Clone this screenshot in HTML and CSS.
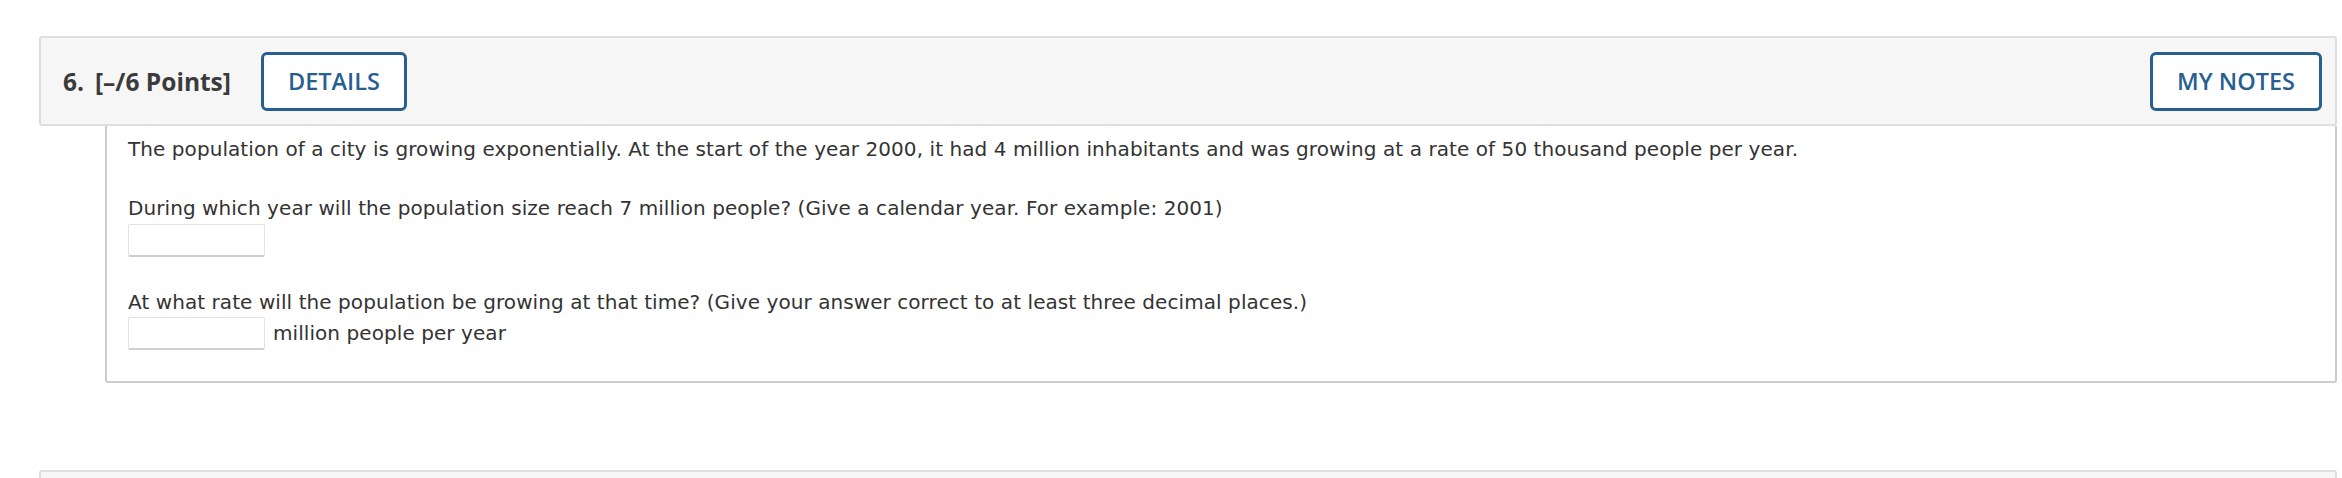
FILE: index.html
```html
<!DOCTYPE html>
<html lang="en">
<head>
<meta charset="utf-8">
<title>Question 6</title>
<link rel="stylesheet" href="styles.css">
</head>
<body>
<div class="page">
  <section class="question">
    <header class="qhead">
      <div class="qhead-left">
        <span class="qnum">6.</span>
        <span class="qpoints">[–/6 Points]</span>
        <button class="btn" type="button">DETAILS</button>
      </div>
      <button class="btn" type="button">MY NOTES</button>
    </header>
    <div class="qbody">
      <p class="line">The population of a city is growing exponentially. At the start of the year 2000, it had 4 million inhabitants and was growing at a rate of 50 thousand people per year.</p>
      <p class="line gap">During which year will the population size reach 7 million people? (Give a calendar year. For example: 2001)</p>
      <div class="ansrow"><input class="ans" type="text"></div>
      <p class="line gap2">At what rate will the population be growing at that time? (Give your answer correct to at least three decimal places.)</p>
      <div class="ansrow"><input class="ans" type="text"><span class="unit">million people per year</span></div>
    </div>
  </section>
  <section class="question next">
    <header class="qhead stub"></header>
  </section>
</div>
</body>
</html>
```
FILE: styles.css
```css
html, body {
  margin: 0;
  padding: 0;
  background: #ffffff;
  overflow: hidden;
}

.page {
  padding: 36px 5px 0 39px;
}

.question {
  display: flex;
  flex-direction: column;
}

.question.next {
  margin-top: 87px;
}

.qhead {
  box-sizing: border-box;
  height: 90px;
  border: 2px solid #dedede;
  border-radius: 3px;
  background: #f6f6f6;
  display: flex;
  align-items: center;
  justify-content: space-between;
  padding: 0 13px 0 22px;
  font-family: "Open Sans", "Noto Sans", sans-serif;
}

.qhead.stub {
  height: 30px;
}

.qhead-left {
  display: flex;
  align-items: center;
}

.qnum,
.qpoints {
  font-weight: 700;
  font-size: 24.5px;
  color: #3b3b3b;
}

.qnum {
  margin-right: 11px;
}

.qpoints {
  margin-right: 30px;
}

.btn {
  box-sizing: border-box;
  height: 59px;
  padding: 0 24px;
  border: 3px solid #27608f;
  border-radius: 6px;
  background: #ffffff;
  color: #27608f;
  font-family: "Open Sans", "Noto Sans", sans-serif;
  font-weight: 600;
  font-size: 23.5px;
  cursor: pointer;
}

.qbody {
  margin-left: 66px;
  border: 2px solid #cccccc;
  border-top: none;
  border-radius: 0 0 3px 3px;
  padding: 9px 20px 31px 21px;
  font-family: Verdana, "DejaVu Sans", sans-serif;
  font-size: 20px;
  letter-spacing: 0.07px;
  line-height: 29.5px;
  color: #333333;
}

.line {
  margin: 0;
}

.line.gap {
  margin-top: 29.5px;
}

.line.gap2 {
  margin-top: 31px;
}

.ansrow {
  display: flex;
  align-items: center;
}

.ans {
  box-sizing: border-box;
  width: 137px;
  height: 33px;
  margin: 0;
  border: 1px solid #e2e2e2;
  border-bottom: 2px solid #cfcfcf;
  border-radius: 2px;
  background: #ffffff;
  padding: 0 4px;
}

.unit {
  margin-left: 8px;
}
```
